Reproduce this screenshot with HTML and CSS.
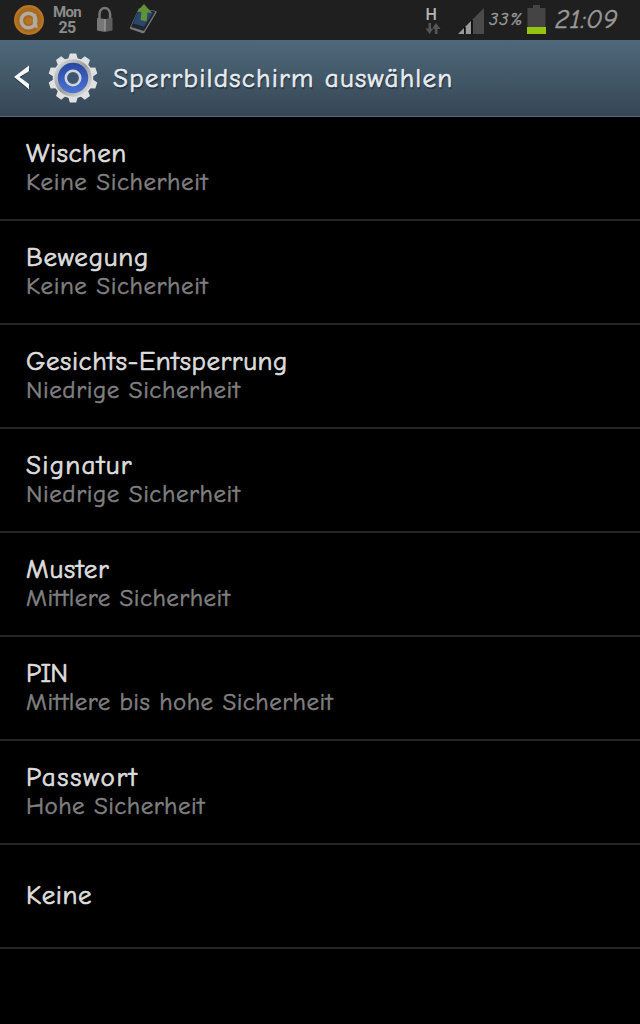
FILE: index.html
```html
<!DOCTYPE html>
<html lang="de">
<head>
<meta charset="UTF-8">
<title>Sperrbildschirm auswählen</title>
<link rel="stylesheet" href="styles.css">
</head>

<body>

<div class="status">
  <svg class="avast" width="32" height="32" viewBox="0 0 32 32">
    <circle cx="16" cy="16" r="15" fill="#b57524"/>
    <circle cx="16" cy="16" r="12.500" fill="#a76a20"/>
    <circle cx="15.500" cy="16.500" r="7.300" fill="none" stroke="#b0aca4" stroke-width="3.600"/>
    <path d="M21.500 10v9.500q0 3 3 2.500" fill="none" stroke="#b0aca4" stroke-width="3.400"/>
    <circle cx="16" cy="17" r="3.500" fill="#b57524"/>
  </svg>
  <div class="datum"><span>Mon</span><span>25</span></div>
  <svg class="schloss" width="20" height="28" viewBox="0 0 20 28">
    <path d="M4.500 13V8a5.300 6 0 0 1 10.600 0v5" fill="none" stroke="#777" stroke-width="2.500"/>
    <path d="M2 12l8 1v13l-8-1.500z" fill="#777"/>
    <path d="M10 13l7.500-1v12.500L10 26z" fill="#5e5e5e"/>
    <path d="M10 13v12" stroke="#999" stroke-width="1.500"/>
  </svg>
  <svg class="upload" width="32" height="34" viewBox="0 0 32 34">
    <path d="M11 5l17 3q1 0 .5 1.500L16.500 29.500q-1 1-2 .7L2.500 26q-1-.5-.5-1.500z" fill="#777a7d"/>
    <path d="M11 5.500l16.500 3-11.500 19.500L3 24z" fill="#20262d"/>
    <path d="M11 7l14 2.500-9 14L5 20.500z" fill="#29466f"/>
    <path d="M16 1l8 9-4.500-.5-1 9-6-1.500 1-8-4.500-.5z" fill="#609338"/>
  </svg>

  <div class="rechts">
    <svg class="netz" width="18" height="31" viewBox="0 -3 18 31">
      <text x="1.500" y="13" class="h">H</text>
      <path d="M1.500 21.500L5.500 27l4-5.500H7V16H4.500v5.500zM8 22l4-6 4.500 6h-3v5h-2.700v-5z" fill="#555"/>
    </svg>
    <svg class="signal" width="26" height="26" viewBox="0 0 26 26">
      <path d="M0 26L6 20v6z" fill="#999"/>
      <path d="M7.500 26v-7.500L13 13v13z" fill="#999"/>
      <path d="M14.500 26V11.500L26 0v26z" fill="#4a4a4a"/>
      <path d="M6.800 26v-7M14 26V12" stroke="#0c0c0c" stroke-width="1.500"/>
    </svg>
    <span class="prozent">33%</span>
    <svg class="akku" width="19" height="29" viewBox="0 0 19 29">
      <path d="M6 0h7v3h5.500v26H.5V3H6z" fill="#444"/>
      <path d="M0 22h19v7H0z" fill="#94c312"/>
    </svg>
    <span class="uhr">21:09</span>
  </div>
</div>

<div class="kopf">
  <svg class="zurueck" width="18" height="28" viewBox="0 0 18 28">
    <path d="M16.200 4.500L4 14l12.200 10" fill="none" stroke="#25313b" stroke-width="4"/>
    <path d="M16 1.500v5.700L6.500 13l9.500 7v5.200L1 13z" fill="#f4f6f8"/>
  </svg>
  <svg class="zahnrad" width="50" height="52" viewBox="-25 -26 50 52">
    <defs>
      <linearGradient id="metall" x1="0" y1="0" x2="1" y2="1">
        <stop offset="0" stop-color="#e4e4e4"/>
        <stop offset=".5" stop-color="#9c9c9f"/>
        <stop offset="1" stop-color="#ececec"/>
      </linearGradient>
      <linearGradient id="blau" x1="0" y1="0" x2="0" y2="1">
        <stop offset="0" stop-color="#2748a0"/>
        <stop offset="1" stop-color="#4c73d2"/>
      </linearGradient>
      <path id="zahn" d="M-5-18l1.800-6.500h6.400L5-18z" fill="#dfe1e2"/>
    </defs>
    <use href="#zahn"/>
    <use href="#zahn" transform="rotate(36)"/>
    <use href="#zahn" transform="rotate(72)"/>
    <use href="#zahn" transform="rotate(108)"/>
    <use href="#zahn" transform="rotate(144)"/>
    <use href="#zahn" transform="rotate(180)"/>
    <use href="#zahn" transform="rotate(216)"/>
    <use href="#zahn" transform="rotate(252)"/>
    <use href="#zahn" transform="rotate(288)"/>
    <use href="#zahn" transform="rotate(324)"/>
    <circle r="20.300" fill="#dfe1e2"/>
    <circle r="18.800" fill="url(#metall)"/>
    <circle r="15.200" fill="url(#blau)"/>
    <circle r="7.200" fill="#40566e" stroke="#cdd4df" stroke-width="2.600"/>
  </svg>
  <h1>Sperrbildschirm auswählen</h1>
</div>

<div class="liste">
  <div class="zeile">
    <h3 class="wischen">Wischen</h3>
    <p class="keine">Keine Sicherheit</p>
  </div>
  <div class="zeile">
    <h3 class="bewegung">Bewegung</h3>
    <p class="keine">Keine Sicherheit</p>
  </div>
  <div class="zeile">
    <h3 class="gesicht">Gesichts-Entsperrung</h3>
    <p class="niedrig">Niedrige Sicherheit</p>
  </div>
  <div class="zeile">
    <h3 class="signatur">Signatur</h3>
    <p class="niedrig">Niedrige Sicherheit</p>
  </div>
  <div class="zeile">
    <h3 class="muster">Muster</h3>
    <p class="mittel">Mittlere Sicherheit</p>
  </div>
  <div class="zeile">
    <h3 class="pin">PIN</h3>
    <p class="mittel">Mittlere bis hohe Sicherheit</p>
  </div>
  <div class="zeile">
    <h3 class="passwort">Passwort</h3>
    <p class="hoch">Hohe Sicherheit</p>
  </div>
  <div class="zeile">
    <h3 class="ohne">Keine</h3>
  </div>
</div>

</body>
</html>
```
FILE: styles.css
```css
* { box-sizing: border-box; }
body {
  margin: 0;
  background: #000;
  font-family: "Comic Sans MS", "Comic Neue", "Open Sans", sans-serif;
}

.status {
  display: flex;
  align-items: flex-start;
  height: 40px;
  padding-left: 13px;
  background: #1f1f1f;
  color: #999;
}
.avast { margin-top: 4px; }
.datum {
  display: flex;
  flex-direction: column;
  align-items: center;
  width: 28px;
  margin: 4px 0 0 8px;
  font: bold 15px/16px Roboto, sans-serif;
  letter-spacing: -.6px;
  color: #8b8b8b;
}
.datum span + span { font-size: 16px; }
.schloss { margin: 6px 0 0 14px; }
.upload { margin: 3px 0 0 13px; }

.rechts {
  display: flex;
  margin-left: auto;
  padding-right: 22px;
}
.h { font: 500 16px Roboto, sans-serif; fill: #b5b5b5; }
.netz { margin-top: 4px; }
.signal { margin: 8px 5px 0 16px; }
.prozent {
  width: 34px;
  margin-right: 4px;
  font-size: 18px;
  line-height: 39px;
  font-style: italic;
  letter-spacing: 1.2px;
  -webkit-text-stroke: .4px #999;
}
.akku { margin: 5px 9px 0 0; }
.uhr {
  width: 63px;
  font-size: 27px;
  line-height: 39px;
  font-style: italic;
  letter-spacing: .5px;
  -webkit-text-stroke: .5px #999;
}

.kopf {
  display: flex;
  align-items: center;
  height: 77px;
  padding: 0 0 1px 13px;
  background: linear-gradient(#4e697b, #364655);
  border-bottom: 1px solid #526777;
}
.zahnrad { margin: 0 15px 0 17px; }
h1 {
  margin: 0;
  padding-top: 2px;
  font-size: 27px;
  font-weight: 400;
  letter-spacing: 1.25px;
  color: #e8edf2;
  -webkit-text-stroke: .6px #e8edf2;
  text-shadow: 1px 2px 1px #26323c;
  white-space: nowrap;
}

.zeile {
  display: flex;
  flex-direction: column;
  justify-content: center;
  height: 104px;
  padding: 0 26px 2px;
  border-bottom: 2px solid #252525;
}
h3, p {
  margin: 0;
  font-weight: 400;
  white-space: nowrap;
}
h3 {
  font-size: 27px;
  line-height: 28px;
  color: #ddd;
  -webkit-text-stroke: .7px #ddd;
}
p {
  font-size: 25px;
  line-height: 27px;
  color: #808080;
  -webkit-text-stroke: .5px #808080;
}
.ohne { padding-top: 2px; }

/* Laufweite */
.wischen, .gesicht, .ohne { letter-spacing: .6px; }
.bewegung, .muster { letter-spacing: .8px; }
.signatur { letter-spacing: 1.3px; }
.passwort { letter-spacing: 1.7px; }
.pin { letter-spacing: -.7px; }
.keine, .niedrig { letter-spacing: .57px; }
.mittel, .hoch { letter-spacing: .47px; }
```
